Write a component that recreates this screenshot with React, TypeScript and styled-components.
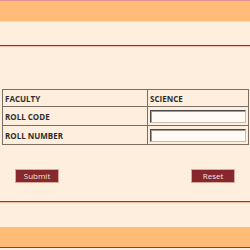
import { JSX } from "react";
import styled, { createGlobalStyle } from "styled-components";

const GlobalStyle = createGlobalStyle`
  html, body {
    margin: 0;
    padding: 0;
    background-color: #feeede;
    font-family: "Open Sans", "Noto Sans", sans-serif;
    color: #333;
  }
`;

const StyledPage = styled.div`
  width: 250px;
  height: 250px;
  overflow: hidden;
`;

const StyledTopBand = styled.div`
  height: 20px;
  border-top: 1px solid #e39090;
  background-color: #ffbb77;
  box-shadow: 0 1px 0 #ffd9b0;
`;

const StyledHeaderSpace = styled.div`
  height: 24px;
  border-bottom: 1px solid #9e2f2f;
  box-shadow: 0 1px 0 #f3b8a6;
`;

const StyledMain = styled.div`
  padding: 43px 1px 0 2px;
`;

const StyledTable = styled.table`
  width: 100%;
  border-collapse: collapse;
  border: 1px solid #7b6d62;
`;

const StyledCell = styled.td<{ $height: number }>`
  border: 1px solid #7b6d62;
  height: ${({ $height }) => $height}px;
  padding: 0 0 0 2px;
  font-size: 8px;
  font-weight: 700;
  color: #2e2e2e;
  vertical-align: middle;
  &:first-child {
    width: 142px;
  }
`;

const StyledInput = styled.input`
  display: block;
  box-sizing: border-box;
  width: 96px;
  height: 13px;
  margin: 0;
  padding: 0;
  background-color: #fffaf3;
  border: 1px solid;
  border-color: #4a4a4a #c9bdb2 #c9bdb2 #4a4a4a;
  box-shadow: inset 1px 1px 0 #a09a94;
`;

const StyledButtonRow = styled.div`
  display: flex;
  justify-content: space-between;
  padding: 24px 15px 0;
`;

const StyledButton = styled.button`
  width: 44px;
  height: 14px;
  margin: 0;
  padding: 0;
  border: 1px solid #d9a99a;
  background-color: #86272b;
  color: #f3e3e3;
  font-family: "Open Sans", "Noto Sans", sans-serif;
  font-size: 8px;
  line-height: 12px;
`;

const StyledFooterLine = styled.div`
  margin-top: 18px;
  height: 25px;
  border-top: 1px solid #a83232;
  box-shadow: inset 0 1px 0 #f3b8a6;
`;

const StyledBottomBand = styled.div`
  height: 20px;
  background-color: #ffbb77;
  border-bottom: 1px solid #a83232;
`;

function App(): JSX.Element {
  return (
    <StyledPage>
      <GlobalStyle />
      <StyledTopBand />
      <StyledHeaderSpace />

      <StyledMain>
        <StyledTable>
          <tbody>
            <tr>
              <StyledCell $height={16}>FACULTY</StyledCell>
              <StyledCell $height={16}>SCIENCE</StyledCell>
            </tr>
            <tr>
              <StyledCell $height={18}>ROLL CODE</StyledCell>
              <StyledCell $height={18}>
                <StyledInput type="text" />
              </StyledCell>
            </tr>
            <tr>
              <StyledCell $height={18}>ROLL NUMBER</StyledCell>
              <StyledCell $height={18}>
                <StyledInput type="text" />
              </StyledCell>
            </tr>
          </tbody>
        </StyledTable>
      </StyledMain>

      <StyledButtonRow>
        <StyledButton type="button">Submit</StyledButton>
        <StyledButton type="button">Reset</StyledButton>
      </StyledButtonRow>

      <StyledFooterLine />
      <StyledBottomBand />
    </StyledPage>
  );
}

export default App;
